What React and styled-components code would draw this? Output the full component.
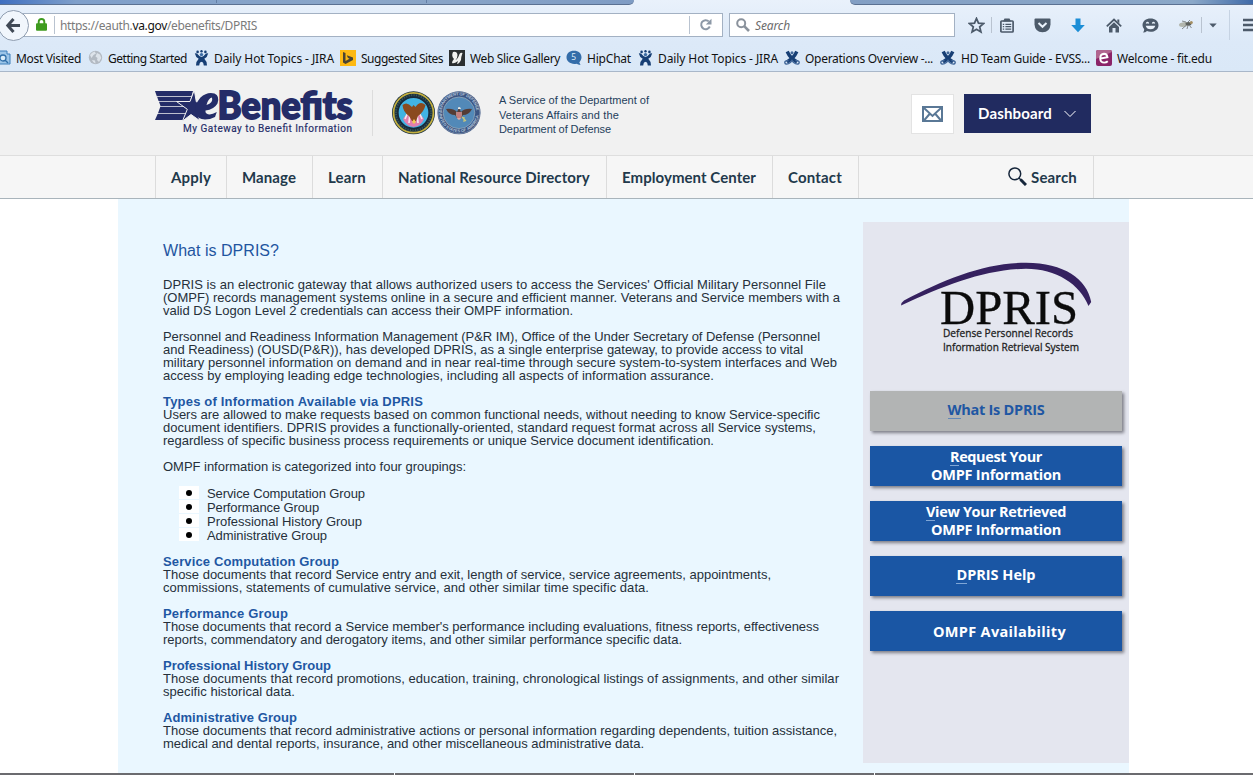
import React, { useLayoutEffect, useRef, useState } from "react";
import styled, { createGlobalStyle, css } from "styled-components";

const Global = createGlobalStyle`
  * { box-sizing: border-box; }
  html, body { margin: 0; padding: 0; background: #fff; overflow: hidden; }
  body { font-family: "Liberation Sans", Arial, sans-serif; }
  ul, p, h1, h2 { margin: 0; padding: 0; font-weight: inherit; font-size: inherit; }
  svg { display: block; flex: none; }
`;

const Measured = styled.span`
  display: inline-block;
  white-space: pre;
`;

/* Tracks a run of text out or in until it spans the given width. */
function Fit({ w, children }) {
  const ref = useRef(null);
  const [spacing, setSpacing] = useState(0);
  useLayoutEffect(() => {
    const el = ref.current;
    const n = el.textContent.length;
    setSpacing((w - el.getBoundingClientRect().width) / n);
  }, [w]);
  return (
    <Measured ref={ref} style={{ letterSpacing: spacing }}>
      {children}
    </Measured>
  );
}

const Page = styled.div`
  width: 1253px;
  height: 775px;
  display: flex;
  flex-direction: column;
  overflow: hidden;
  background: #fff;
`;

/* ---------- browser chrome ---------- */
const Chrome = styled.header`
  flex: none;
  height: 72px;
  display: flex;
  flex-direction: column;
  background: linear-gradient(#e9f1fb, #dce9f8 60%, #dae8f7);
  border-bottom: 1px solid #a9b7c9;
`;
const TabStrip = styled.div`
  height: 5px;
  display: flex;
  justify-content: space-between;
`;
const TabEdge = styled.div`
  height: 5px;
  width: ${(p) => p.$w}px;
  padding-left: 216px;
  border-bottom: 1px solid #5b7192;
  display: flex;
  gap: 209px;
  ${(p) =>
    p.$left
      ? css`
          background: linear-gradient(90deg, #3f6fc0, #7f9fca 12%, #8ba6c8 60%, #7f9cc4);
          border-bottom-right-radius: 7px;
        `
      : css`
          background: linear-gradient(90deg, #839fc4, #8ba8c8 85%, #3f6aa8);
          border-bottom-left-radius: 7px;
        `}
`;
const TabGap = styled.i`
  width: 1px;
  height: 3px;
  background: #647fa6;
`;
const ToolRow = styled.div`
  height: 39px;
  display: flex;
  align-items: center;
`;
const BackButton = styled.div`
  width: 31px;
  height: 31px;
  margin: 2px -15px 0 -2px;
  border: 1px solid #8f9db0;
  border-radius: 50%;
  background: #f1f6fc;
  display: flex;
  align-items: center;
  justify-content: center;
  z-index: 1;
  flex: none;
`;
const Field = styled.div`
  height: 24px;
  margin-top: 1px;
  width: ${(p) => p.$w}px;
  flex: none;
  background: #fff;
  border: 1px solid #a3b1c3;
  display: flex;
  align-items: center;
`;
const SearchField = styled(Field)`
  margin-left: 6px;
  padding-left: 6px;
`;
const UrlLead = styled.div`
  padding: 0 7px 0 21px;
`;
const Rule = styled.div`
  width: 1px;
  height: ${(p) => p.$h}px;
  background: ${(p) => p.$c || "#b9c3d0"};
  margin: 0 ${(p) => p.$r || 0}px 0 ${(p) => p.$l || 0}px;
  flex: none;
`;
const Url = styled.div`
  flex: 1;
  padding: 2px 0 0 5px;
  font: 12px/20px "Noto Sans", sans-serif;
  color: #7b7b7b;
  b { font-weight: 400; color: #111; }
`;
const Hint = styled.div`
  padding: 2px 0 0 5px;
  font: italic 12px/20px "Noto Sans", sans-serif;
  color: #6c6c6c;
`;
const ToolIcon = styled.div`
  width: 36px;
  height: 20px;
  display: flex;
  align-items: center;
  justify-content: center;
  flex: none;
`;
const ListSlot = styled(ToolIcon)`
  width: 30px;
  margin-right: 2px;
`;
const ToolIcons = styled.div`
  display: flex;
  align-items: center;
  margin-left: 3px;
  padding-top: 2px;
`;
const BookmarkRow = styled.div`
  height: 28px;
  display: flex;
  align-items: center;
  padding-top: 1px;
  font: 12px/20px "Noto Sans", sans-serif;
  color: #111;
`;
const Bookmark = styled.div`
  width: ${(p) => p.$w}px;
  flex: none;
  display: flex;
  align-items: center;
  gap: 5px;
  white-space: nowrap;
  span { margin-top: 2px; }
`;

const Jira = () => (
  <svg width="15" height="16" viewBox="0 0 15 16">
    <g fill="#173f75">
      <circle cx="3.600" cy="1.900" r="1.300" /><circle cx="7.500" cy="1.200" r="1.200" /><circle cx="11.400" cy="1.900" r="1.300" />
      <path d="M.8 3.200L3 3.400Q5 6 7.500 7Q10 6 12 3.400L14.200 3.200Q13.500 7 10.300 8.800Q12.800 11 13 15.500H9.800Q9.800 12.500 7.500 11.300Q5.200 12.500 5.200 15.500H2Q2.200 11 4.700 8.800Q1.500 7 .8 3.200Z" />
      <path d="M5 7H10V10.500L7.500 12L5 10.500Z" />
    </g>
    <circle cx="7.500" cy="4.600" r="1.700" fill="#3d6ca3" />
  </svg>
);
const Confluence = () => (
  <svg width="16" height="16" viewBox="0 0 16 16" fill="none" stroke="#173f75">
    <path d="M3.200 1.500Q6 8 13 12M12.800 1.500Q10 8 3 12" strokeWidth="3.400" />
    <path d="M4.500 10.500Q.6 10.500 .8 12.700Q1.500 14.800 4.500 13.700Q7 12.500 8 10.500Q9 12.500 11.500 13.700Q14.500 14.800 15.200 12.700Q15.400 10.500 11.500 10.500" strokeWidth="1.400" stroke="#42689a" />
    <circle cx="8" cy="2.800" r="1.500" fill="#42689a" stroke="none" />
  </svg>
);
const Globe = () => (
  <svg width="15" height="15" viewBox="0 0 15 15">
    <circle cx="7.500" cy="7.500" r="6.700" fill="#b3bac3" />
    <path d="M2 5Q4 2 6.500 1.500L8 3.500L5.500 5L3.500 8ZM9 3L12 4.500L13.300 8L11 12L9 10L9.500 8L7.500 6.500ZM4 10L7 10.500L7.500 13.500Q5 13 4 10Z" fill="#dde3ea" />
  </svg>
);
const Visited = () => (
  <svg width="11" height="16" viewBox="0 0 11 16">
    <path d="M-1 1H7V4H10V14H-1Z" fill="#9cc5e8" stroke="#3c7fba" />
    <circle cx="3" cy="8" r="3" fill="#d9ecf9" stroke="#2f6ea8" strokeWidth="1.300" />
    <path d="M5.200 10.200L8 13" stroke="#2f6ea8" strokeWidth="1.400" />
  </svg>
);
const Bing = () => (
  <svg width="16" height="16" viewBox="0 0 16 16">
    <rect width="16" height="16" fill="#fdb913" />
    <path d="M3 2L5.500 3V11L9.500 8.800L7.800 7.800L6.800 5.300L13 7.500V10L5.500 14L3 12.500Z" fill="#4a4433" />
  </svg>
);
const Slice = () => (
  <svg width="16" height="16" viewBox="0 0 16 16">
    <rect width="16" height="16" fill="#2b2f31" />
    <path d="M4 2Q8 1 8.500 5Q8.500 8 6.500 10Q9 9 10.500 4Q12 2 13.500 3Q12 7 12 10Q10 14 8 14L9 11Q5 14 3 13Q3 11 5 9Q2 6 4 2Z" fill="#f2f2f0" />
  </svg>
);
const HipChat = () => (
  <svg width="16" height="16" viewBox="0 0 16 16">
    <path d="M8 .8C12.500 .8 15.500 3.500 15.500 7.300C15.500 9.500 14.500 11 13.300 12.200L14.500 15Q12 14.800 10.500 13.700C5 14.700 .5 11.800 .5 7.300C.5 3.500 3.500 .8 8 .8Z" fill="#346da9" />
    <text x="7.700" y="10.400" fontSize="8.500" textAnchor="middle" fill="#dcebf8" fontFamily="Noto Sans, sans-serif">5</text>
  </svg>
);
const FitEdu = () => (
  <svg width="16" height="16" viewBox="0 0 16 16">
    <rect width="16" height="16" rx="2" fill="#8b2468" />
    <path d="M0 2Q0 0 2 0H14Q16 0 16 2L0 9Z" fill="#b0658f" />
    <path d="M4.500 8.500L11.500 7.300Q11 3.800 8 3.800Q4.200 4 4.200 8.500Q4.400 12.600 8.300 12.600Q10.300 12.600 11.800 11.300" fill="none" stroke="#fff" strokeWidth="1.900" />
  </svg>
);

const bookmarks = [
  [Visited, "Most Visited", 65, 88],
  [Globe, "Getting Started", 79, 106],
  [Jira, "Daily Hot Topics - JIRA", 120, 146],
  [Bing, "Suggested Sites", 82, 109],
  [Slice, "Web Slice Gallery", 90, 117],
  [HipChat, "HipChat", 44, 72],
  [Jira, "Daily Hot Topics - JIRA", 120, 146],
  [Confluence, "Operations Overview -...", 128, 156],
  [Confluence, "HD Team Guide - EVSS...", 129, 156],
  [FitEdu, "Welcome - fit.edu", 95, 120],
];

const G = "#4c5a6a";
function BrowserChrome() {
  return (
    <Chrome>
      <TabStrip>
        <TabEdge $w={634} $left><TabGap /><TabGap /></TabEdge>
        <TabEdge $w={403} />
      </TabStrip>
      <ToolRow>
        <BackButton>
          <svg width="17" height="17" viewBox="0 0 17 17" fill="none" stroke="#414a56" strokeWidth="3">
            <path d="M8.500 2L2.800 8.500L8.500 15M3 8.500H15" />
          </svg>
        </BackButton>
        <Field $w={709}>
          <UrlLead>
            <svg width="11" height="13" viewBox="0 0 11 13">
              <path d="M2.700 6V3.800Q2.700 1 5.500 1T8.300 3.800V6" fill="none" stroke="#3f9b1f" strokeWidth="1.900" />
              <rect y="5.200" width="11" height="7.600" rx="1" fill="#3f9b1f" />
            </svg>
          </UrlLead>
          <Rule $h={18} />
          <Url><Fit w={197}>https://eauth.<b>va.gov</b>/ebenefits/DPRIS</Fit></Url>
          <Rule $h={18} $r={9} />
          <svg width="23" height="14" viewBox="0 0 23 14">
            <path d="M9.800 3.400A4.500 4.500 0 1 0 10.800 8.500" fill="none" stroke="#8c98a6" strokeWidth="2" />
            <path d="M12.500 .8V6.500H6.800Z" fill="#8c98a6" />
          </svg>
        </Field>
        <SearchField $w={226}>
          <svg width="14" height="14" viewBox="0 0 14 14" fill="none" stroke="#8a929c">
            <circle cx="5.200" cy="5.200" r="4" strokeWidth="2" />
            <path d="M8.200 8.200L13 13" strokeWidth="2.600" />
          </svg>
          <Hint><Fit w={35}>Search</Fit></Hint>
        </SearchField>
        <ToolIcons>
          <ToolIcon>
            <svg width="17" height="17" viewBox="0 0 17 17">
              <path d="M8.500 1.500L10.500 6.200L15.600 6.600L11.700 9.900L12.900 14.900L8.500 12.200L4.100 14.900L5.300 9.900L1.400 6.600L6.500 6.200Z" fill="none" stroke={G} strokeWidth="1.800" />
            </svg>
          </ToolIcon>
          <Rule $h={16} $l={-3} />
          <ListSlot>
            <svg width="14" height="15" viewBox="0 0 14 15">
              <rect x=".9" y="3" width="12.200" height="11" rx=".8" fill="none" stroke={G} strokeWidth="1.700" />
              <path d="M4.500 .5H9.500L11 3.500H3Z" fill={G} />
              <path d="M2.800 6.300H4.200M5.400 6.300H11.200M2.800 8.700H4.200M5.400 8.700H11.200M2.800 11.100H4.200M5.400 11.100H11.200" stroke={G} strokeWidth="1.200" />
            </svg>
          </ListSlot>
          <ToolIcon>
            <svg width="17" height="15" viewBox="0 0 17 15">
              <path d="M1.500 .5H15.500Q16.500 .5 16.500 1.500V6.500Q16 14 8.500 14.200Q1 14 .5 6.500V1.500Q.5 .5 1.500 .5Z" fill={G} />
              <path d="M4.500 5L8.500 8.800L12.500 5" fill="none" stroke="#eaf2fb" strokeWidth="2" />
            </svg>
          </ToolIcon>
          <ToolIcon>
            <svg width="14" height="15" viewBox="0 0 14 15">
              <path d="M4.500 .5H9.500V7H13.800L7 14.300L.2 7H4.500Z" fill="#1c8ed6" />
            </svg>
          </ToolIcon>
          <ToolIcon>
            <svg width="16" height="15" viewBox="0 0 16 15">
              <path d="M.8 8.300L8 1.500L15.200 8.300" fill="none" stroke={G} strokeWidth="1.800" />
              <path d="M11.300 1.500H13.300V5.500L11.300 3.500ZM3 9L8 4.300L13 9V14.500H9.500V10H6.500V14.500H3Z" fill={G} />
            </svg>
          </ToolIcon>
          <ToolIcon>
            <svg width="17" height="15" viewBox="0 0 17 15">
              <path d="M8.500 .5C13 .5 16.500 3 16.500 7.200S13 13.800 8.500 13.800Q6.500 13.800 5 13Q3.500 14.500 1 14.500Q2.300 13 2.200 11.300Q.5 9.500 .5 7.200C.5 3 4 .5 8.500 .5Z" fill={G} />
              <path d="M4.300 5.500Q5.500 3.500 6.700 5.500M10.300 5.500Q11.500 3.500 12.700 5.500" fill="none" stroke="#eaf2fb" strokeWidth="1.300" />
              <path d="M3.700 7.800H13.300Q12.300 11.300 8.500 11.300T3.700 7.800Z" fill="#eaf2fb" />
            </svg>
          </ToolIcon>
          <ToolIcon>
            <svg width="16" height="13" viewBox="0 0 16 13">
              <ellipse cx="6" cy="5.500" rx="5" ry="2.300" fill="#b2b6ad" transform="rotate(-8 6 6)" />
              <ellipse cx="10.500" cy="4.800" rx="3" ry="1.900" fill="#5c605d" />
              <circle cx="13.300" cy="3.500" r="1.500" fill="#a58f62" />
              <path d="M8 6.500L4 10M10 6.500L9 10M11.500 6.500L13.500 9M8 3L4 2M10 3L12 1" stroke="#6c7072" strokeWidth=".8" />
            </svg>
          </ToolIcon>
          <Rule $h={16} $l={-3} $r={7} />
          <svg width="8" height="5" viewBox="0 0 8 5"><path d="M.3 .5H7.700L4 4.500Z" fill={G} /></svg>
          <Rule $h={30} $l={12} $r={13} $c="#c6d3e3" />
          <svg width="16" height="14" viewBox="0 0 16 14"><path d="M0 2H16M0 7H16M0 12H16" stroke={G} strokeWidth="2.500" /></svg>
        </ToolIcons>
      </ToolRow>
      <BookmarkRow>
        {bookmarks.map(([Icon, label, w, slot], i) => (
          <Bookmark key={i} $w={slot}>
            <Icon />
            <Fit w={w}>{label}</Fit>
          </Bookmark>
        ))}
      </BookmarkRow>
    </Chrome>
  );
}

/* ---------- site header ---------- */
const SiteHead = styled.div`
  flex: none;
  height: 84px;
  background: #f1f1f1;
  border-bottom: 1px solid #dedede;
  padding-left: 155px;
  display: flex;
`;
const HeadRule = styled.div`
  width: 1px;
  height: 46px;
  margin: 18px 18px 0 19px;
  background: #dcdcdc;
`;
const Seals = styled.div`
  padding-top: 18px;
`;
const Service = styled.div`
  width: 430px;
  flex: none;
  padding: 21px 0 0 18px;
  font-size: 11px;
  line-height: 14.5px;
  color: #24405c;
`;
const MailButton = styled.div`
  width: 43px;
  height: 40px;
  margin: 22px 10px 0 0;
  background: #fff;
  border: 1px solid #e3e3e3;
  display: flex;
  align-items: center;
  justify-content: center;
`;
const DashButton = styled.div`
  width: 127px;
  height: 39px;
  margin-top: 22px;
  padding-left: 14px;
  background: #212b60;
  color: #fff;
  font: 700 15px/39px Lato, sans-serif;
  display: flex;
  align-items: center;
  gap: 12px;
`;
const NavBar = styled.nav`
  flex: none;
  height: 43px;
  background: #f6f6f6;
  border-bottom: 1px solid #a9b4bb;
  padding-left: 155px;
  display: flex;
`;
const NavItem = styled.div`
  width: ${(p) => p.$w}px;
  height: 42px;
  border-left: 1px solid #dcdcdc;
  padding-left: 15px;
  font: 700 15px/43px Lato, sans-serif;
  color: #22394b;
`;
const NavSearch = styled(NavItem)`
  border-right: 1px solid #dcdcdc;
  padding: 0 16px 0 0;
  display: flex;
  justify-content: flex-end;
  gap: 4px;
  svg { margin-top: 11px; }
`;
const navItems = [
  ["Apply", 71, 40], ["Manage", 86, 54], ["Learn", 70, 38],
  ["National Resource Directory", 224, 192], ["Employment Center", 166, 134], ["Contact", 86, 54],
];

const EBenefitsLogo = () => (
  <svg width="198" height="83" viewBox="155 72 198 83">
    <g fill="#242c68">
      <path d="M155 91H193L191.500 96.300H156.800Z" />
      <path d="M157.200 97.100H191.200L190.200 100.900H158.600Z" />
      <path d="M159 101.700H178L184.500 106H160.500Z" />
      <path d="M160.300 106.800H185.500L188.300 109L186.800 113.200H158Z" />
      <path d="M157.600 114H186.500L184.500 120H155Z" />
    </g>
    <path d="M194.300 90L196.300 101.800L206 102.500L197.300 108.500L199.500 120.500L191 114.500L182.500 121L187.300 109.300L176.500 101.500H190Z" fill="#242c68" stroke="#f1f1f1" strokeWidth="1" />
    <path d="M216.800 112Q210 116 206.500 113.500Q205 112.500 205.500 110.500Q214 109.500 217.500 103.500Q220 96 214.500 93.500Q207 91.500 200.500 97.500Q194 105 195.500 112.500Q197.500 119.500 205 119.500Q210 119.500 215 117Z M212 97.500Q213.500 103 206.500 105Q208 98.500 212 97.500Z" fillRule="evenodd" fill="#242c68" />
    <text x="217.500" y="119.300" textLength="135" lengthAdjust="spacingAndGlyphs" fontFamily="Lato, sans-serif" fontWeight="900" fontSize="38" fill="#242c68" stroke="#242c68" strokeWidth="1.800">Benefits</text>
    <text x="183" y="132" textLength="169" fontFamily="Roboto, sans-serif" fontSize="10" fill="#242c68" stroke="#242c68" strokeWidth=".15">My Gateway to Benefit Information</text>
  </svg>
);

const SealsArt = () => (
  <svg width="90" height="46" viewBox="391 90 90 46">
    <defs>
      <path id="ring" d="M441.700 112.500A17.300 17.300 0 0 1 476.300 112.500" />
      <path id="ringLow" d="M440.200 112.500A18.800 18.800 0 0 0 477.800 112.500" />
    </defs>
    <circle cx="413.500" cy="112.800" r="21.500" fill="#1c3140" />
    <circle cx="413.500" cy="112.800" r="19.900" fill="none" stroke="#c4b03f" strokeWidth="1.700" />
    <circle cx="413.500" cy="112.800" r="17.600" fill="none" stroke="#3b5a58" strokeWidth="2" strokeDasharray="1 1.500" />
    <circle cx="413.500" cy="112.800" r="15.600" fill="#41b4e3" stroke="#172a3b" strokeWidth="1.500" />
    <path d="M403 119Q406 113 413.500 114Q421 113 424 119Q421 126 413.500 127Q406 126 403 119Z" fill="#e27fae" />
    <path d="M405 119L408 112M409 123L410 113M418 123L417 113M422 119L419 112" stroke="#f4e7ee" strokeWidth="1.700" />
    <path d="M402.500 105Q407 101 412 107L413.500 105L415.500 107Q420 100 425.500 105Q424 112 418 116L416 121H412L409 116Q403 112 402.500 105Z" fill="#8a4a1e" />
    <path d="M412 122L414 119L416 122L414 124Z" fill="#f1cd51" />
    <circle cx="459" cy="112.800" r="21.500" fill="#3b5583" />
    <circle cx="459" cy="112.800" r="20.800" fill="none" stroke="#7d8fa9" strokeWidth=".8" />
    <circle cx="459" cy="112.800" r="15.800" fill="#5289b8" stroke="#92a6b8" strokeWidth=".8" />
    <g fontFamily="Liberation Sans, sans-serif" fontWeight="700" fontSize="4" fill="#b7c7dc">
      <text><textPath href="#ring" textLength="52">DEPARTMENT OF DEFENSE</textPath></text>
      <text dy="1"><textPath href="#ringLow" textLength="56">UNITED STATES OF AMERICA</textPath></text>
    </g>
    <path d="M446 109Q453 108 457 112L459 108L461 112Q465 108 472 109Q469 115 463 115L461 118H457L455 115Q449 115 446 109Z" fill="#553c35" />
    <path d="M456.300 112H461.700V116Q461 119 459 120Q457 119 456.300 116Z" fill="#d9aaa6" />
    <path d="M458 112V118M460 112V118" stroke="#a13b44" strokeWidth=".8" />
    <path d="M462 117L466 121M464 117V122" stroke="#c7c77c" strokeWidth="1.200" />
    <path d="M458 107.500Q460 106 461 109H458Z" fill="#e8e8e4" />
  </svg>
);

/* ---------- content ---------- */
const Body = styled.main`
  flex: none;
  height: 574px;
  width: 1011px;
  margin-left: 118px;
  background: #eaf7ff;
  display: flex;
`;
const Article = styled.article`
  width: 745px;
  padding: 42px 0 0 45px;
  font-size: 13px;
  line-height: 13px;
  color: #26303a;
`;
const Title = styled.h1`
  height: 37px;
  font-size: 16px;
  line-height: 19px;
  color: #1f55a0;
`;
const Section = styled.section`
  display: flex;
  flex-direction: column;
  margin-bottom: 13px;
`;
const Line = styled.div`
  height: 13px;
`;
const SubHead = styled.h2`
  height: 13px;
  font-weight: 700;
  color: #1f57a3;
`;
const Bullets = styled.ul`
  list-style: none;
  margin: 0 0 13px;
  padding-left: 16px;
  line-height: 16px;
`;
const Bullet = styled.li`
  height: 14px;
  display: flex;
  gap: 8px;
`;
const Dot = styled.span`
  width: 20px;
  height: 13px;
  background: #fff;
  display: flex;
  align-items: center;
  justify-content: center;
  &::after { content: ""; width: 6px; height: 6px; border-radius: 50%; background: #000; }
`;
const Side = styled.aside`
  width: 266px;
  height: 541px;
  margin-top: 23px;
  background: #e4e6ef;
  padding-left: 7px;
  display: flex;
  flex-direction: column;
  gap: 15px;
`;
const LogoBox = styled.div`
  height: 154px;
  margin-left: -7px;
`;
const SideButton = styled.div`
  width: 252px;
  height: 40px;
  padding: ${(p) => p.$pad || "0 0 1px"};
  background: ${(p) => (p.$current ? "#b2b4b4" : "#1a56a4")};
  color: ${(p) => (p.$current ? "#1f57a3" : "#fff")};
  box-shadow: 2px 2px 3px rgba(70, 70, 80, 0.65);
  font: 700 14.5px/18px "Open Sans", sans-serif;
  font-stretch: 90%;
  display: flex;
  flex-direction: column;
  justify-content: center;
  align-items: center;
`;
const Key = styled.span`
  box-shadow: 0 1px 0 ${(p) => (p.$current ? "#6288b8" : "#7fa6d6")};
  display: inline-block;
  height: 17px;
`;
const Footer = styled.footer`
  flex: none;
  height: 2px;
  background: #6b6b6f;
  display: flex;
  padding-left: 394px;
  gap: 239px;
`;
const FooterTick = styled.i`
  width: 1px;
  height: 2px;
  background: #fff;
`;

const intro = [
  [
    ["DPRIS is an electronic gateway that allows authorized users to access the Services' Official Military Personnel File", 663],
    ["(OMPF) records management systems online in a secure and efficient manner. Veterans and Service members with a", 677],
    ["valid DS Logon Level 2 credentials can access their OMPF information.", 410],
  ],
  [
    ["Personnel and Readiness Information Management (P&R IM), Office of the Under Secretary of Defense (Personnel", 657],
    ["and Readiness) (OUSD(P&R)), has developed DPRIS, as a single enterprise gateway, to provide access to vital", 640],
    ["military personnel information on demand and in near real-time through secure system-to-system interfaces and Web", 674],
    ["access by employing leading edge technologies, including all aspects of information assurance.", 551],
  ],
];
const types = ["Types of Information Available via DPRIS", 260, [
  ["Users are allowed to make requests based on common functional needs, without needing to know Service-specific", 657],
  ["document identifiers. DPRIS provides a functionally-oriented, standard request format across all Service systems,", 653],
  ["regardless of specific business process requirements or unique Service document identification.", 551],
]];
const groups = [
  ["Service Computation Group", 176, [
    ["Those documents that record Service entry and exit, length of service, service agreements, appointments,", 608],
    ["commissions, statements of cumulative service, and other similar time specific data.", 486],
  ]],
  ["Performance Group", 125, [
    ["Those documents that record a Service member's performance including evaluations, fitness reports, effectiveness", 656],
    ["reports, commendatory and derogatory items, and other similar performance specific data.", 519],
  ]],
  ["Professional History Group", 168, [
    ["Those documents that record promotions, education, training, chronological listings of assignments, and other similar", 676],
    ["specific historical data.", 132],
  ]],
  ["Administrative Group", 134, [
    ["Those documents that record administrative actions or personal information regarding dependents, tuition assistance,", 674],
    ["medical and dental reports, insurance, and other miscellaneous administrative data.", 481],
  ]],
];
const bullets = [
  ["Service Computation Group", 158], ["Performance Group", 112],
  ["Professional History Group", 155], ["Administrative Group", 120],
];

function TextBlock({ head, headWidth, lines }) {
  return (
    <Section>
      {head && <SubHead><Fit w={headWidth}>{head}</Fit></SubHead>}
      {lines.map(([t, w]) => <Line key={t}><Fit w={w}>{t}</Fit></Line>)}
    </Section>
  );
}

const DprisLogo = () => (
  <svg width="266" height="150" viewBox="863 222 266 150">
    <path d="M901 305.500Q901.500 302 904 300.500C945 279 985 262.800 1026 262.800C1064 263 1087 279 1091.200 302L1088.500 306C1080 284 1056 268.700 1026 268.700C985 269.500 945 285 901 305.500Z" fill="#35215f" />
    <text x="940" y="324" textLength="138" lengthAdjust="spacingAndGlyphs" fontFamily="Liberation Serif, serif" fontSize="48" fill="#0b0b0b" stroke="#0b0b0b" strokeWidth=".3">DPRIS</text>
    <g fontFamily="Open Sans, sans-serif" fontSize="11" fill="#222" stroke="#222" strokeWidth=".3">
      <text x="943" y="337" textLength="130" lengthAdjust="spacingAndGlyphs">Defense Personnel Records</text>
      <text x="943" y="350.500" textLength="136" lengthAdjust="spacingAndGlyphs">Information Retrieval System</text>
    </g>
  </svg>
);

export default function App() {
  return (
    <>
      <Global />
      <Page>
        <BrowserChrome />
        <SiteHead>
          <EBenefitsLogo />
          <HeadRule />
          <Seals><SealsArt /></Seals>
          <Service>
            <div><Fit w={150}>A Service of the Department of</Fit></div>
            <div><Fit w={120}>Veterans Affairs and the</Fit></div>
            <div><Fit w={112}>Department of Defense</Fit></div>
          </Service>
          <MailButton>
            <svg width="21" height="16" viewBox="0 0 21 16" fill="none" stroke="#5a7896">
              <rect x="1" y="1" width="19" height="14" strokeWidth="2" />
              <path d="M2 2L10.500 10L19 2M2 14.500L8 7.500M19 14.500L13 7.500" strokeWidth="2" />
            </svg>
          </MailButton>
          <DashButton>
            <Fit w={74}>Dashboard</Fit>
            <svg width="12" height="8" viewBox="0 0 12 8"><path d="M.5 1L6 6.500L11.500 1" fill="none" stroke="#fff" /></svg>
          </DashButton>
        </SiteHead>
        <NavBar>
          {navItems.map(([t, slot, w]) => (
            <NavItem key={t} $w={slot}><Fit w={w}>{t}</Fit></NavItem>
          ))}
          <NavSearch $w={236}>
            <svg width="19" height="19" viewBox="0 0 19 19" fill="none" stroke="#16263b">
              <circle cx="6.800" cy="6.800" r="5.900" strokeWidth="1.500" />
              <path d="M11 11L13 13" strokeWidth="1.500" />
              <path d="M12.500 12.500L18 18" strokeWidth="3" />
            </svg>
            <Fit w={46}>Search</Fit>
          </NavSearch>
        </NavBar>
        <Body>
          <Article>
            <Title><Fit w={116}>What is DPRIS?</Fit></Title>
            {intro.map((lines, i) => <TextBlock key={i} lines={lines} />)}
            <TextBlock head={types[0]} headWidth={types[1]} lines={types[2]} />
            <TextBlock lines={[["OMPF information is categorized into four groupings:", 303]]} />
            <Bullets>
              {bullets.map(([t, w]) => <Bullet key={t}><Dot /><Fit w={w}>{t}</Fit></Bullet>)}
            </Bullets>
            {groups.map(([h, w, lines]) => <TextBlock key={h} head={h} headWidth={w} lines={lines} />)}
          </Article>
          <Side>
            <LogoBox><DprisLogo /></LogoBox>
            <SideButton $current $pad="0 0 2px"><Fit w={97}><Key $current>W</Key>hat Is DPRIS</Fit></SideButton>
            <SideButton>
              <Fit w={92}><Key>R</Key>equest Your</Fit>
              <Fit w={130}>OMPF Information</Fit>
            </SideButton>
            <SideButton>
              <Fit w={140}><Key>V</Key>iew Your Retrieved</Fit>
              <Fit w={130}>OMPF Information</Fit>
            </SideButton>
            <SideButton $pad="0 0 2px"><Fit w={79}><Key>D</Key>PRIS Help</Fit></SideButton>
            <SideButton $pad="2px 0 0 7px"><Fit w={133}>OMPF Availability</Fit></SideButton>
          </Side>
        </Body>
        <Footer><FooterTick /><FooterTick /><FooterTick /></Footer>
      </Page>
    </>
  );
}
